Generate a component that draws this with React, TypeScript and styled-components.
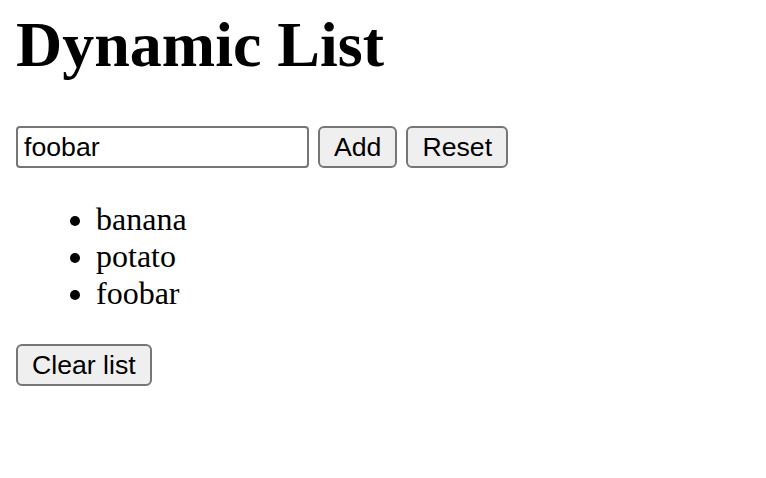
import React, { useState } from "react";
import styled, { createGlobalStyle } from "styled-components";

const GlobalStyle = createGlobalStyle`
  html, body {
    margin: 0;
    padding: 0;
    background: #ffffff;
  }
  body {
    font-family: "Liberation Serif", "Times New Roman", serif;
    color: #000000;
  }
`;

const Page = styled.main`
  display: flex;
  flex-direction: column;
  align-items: flex-start;
  padding: 8px 16px 16px;
`;

const Title = styled.h1`
  margin: 0 0 44px;
  font-family: "Liberation Serif", "Times New Roman", serif;
  font-weight: 700;
  font-size: 64px;
  line-height: 74px;
`;

const FormRow = styled.div`
  display: flex;
  align-items: center;
  gap: 9px;
`;

const TextInput = styled.input`
  box-sizing: border-box;
  width: 293px;
  height: 42px;
  padding: 0 6px;
  border: 2px solid #767676;
  border-radius: 4px;
  background: #ffffff;
  font-family: "Liberation Sans", Arial, sans-serif;
  font-size: 26.67px;
  color: #000000;
  outline: none;
`;

const Button = styled.button`
  box-sizing: border-box;
  height: 42px;
  padding: 0 14px;
  border: 2px solid #767676;
  border-radius: 6px;
  background: #efefef;
  font-family: "Liberation Sans", Arial, sans-serif;
  font-size: 26.67px;
  color: #000000;
  cursor: pointer;
`;

const List = styled.ul`
  margin: 33px 0 32px;
  padding-left: 80px;
  list-style: disc;
  font-size: 32px;
  line-height: 37px;
`;

const Item = styled.li``;

export default function App() {
  const [value, setValue] = useState("foobar");
  const [items, setItems] = useState<string[]>(["banana", "potato", "foobar"]);

  return (
    <>
      <GlobalStyle />
      <Page>
        <Title>Dynamic List</Title>
        <FormRow>
          <TextInput value={value} onChange={(e) => setValue(e.target.value)} />
          <Button onClick={() => value && setItems([...items, value])}>Add</Button>
          <Button onClick={() => setValue("")}>Reset</Button>
        </FormRow>
        <List>
          {items.map((it, i) => (
            <Item key={i}>{it}</Item>
          ))}
        </List>
        <Button onClick={() => setItems([])}>Clear list</Button>
      </Page>
    </>
  );
}
